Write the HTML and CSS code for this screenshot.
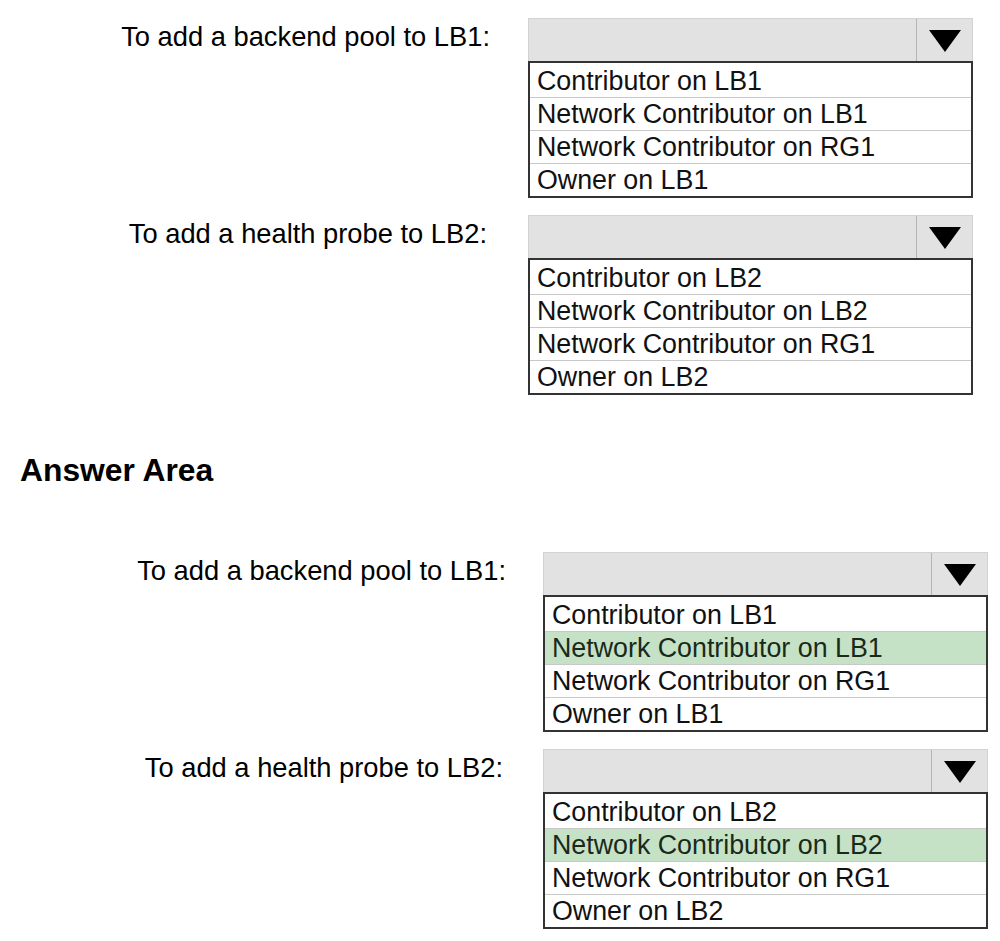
FILE: index.html
```html
<!DOCTYPE html>
<html lang="en">
<head>
    <meta charset="UTF-8">
    <meta name="viewport" content="width=device-width, initial-scale=1.0">
    <title>Load balancer roles</title>
    <link rel="stylesheet" href="styles.css">
</head>
<body>
    <main>
        <section class="question">
            <div class="item">
                <div class="label">To add a backend pool to LB1:</div>
                <div class="dropdown">
                    <div class="dropdown-head">
                        <span class="arrow">
                            <svg width="32" height="22" viewBox="0 0 32 22"><polygon points="0,0 32,0 16,22" fill="#000"/></svg>
                        </span>
                    </div>
                    <ul class="options">
                        <li>Contributor on LB1</li>
                        <li>Network Contributor on LB1</li>
                        <li>Network Contributor on RG1</li>
                        <li>Owner on LB1</li>
                    </ul>
                </div>
            </div>
            <div class="item">
                <div class="label short">To add a health probe to LB2:</div>
                <div class="dropdown">
                    <div class="dropdown-head">
                        <span class="arrow">
                            <svg width="32" height="22" viewBox="0 0 32 22"><polygon points="0,0 32,0 16,22" fill="#000"/></svg>
                        </span>
                    </div>
                    <ul class="options">
                        <li>Contributor on LB2</li>
                        <li>Network Contributor on LB2</li>
                        <li>Network Contributor on RG1</li>
                        <li>Owner on LB2</li>
                    </ul>
                </div>
            </div>
        </section>

        <h2 class="answer-title">Answer Area</h2>

        <section class="question answer">
            <div class="item">
                <div class="label">To add a backend pool to LB1:</div>
                <div class="dropdown">
                    <div class="dropdown-head">
                        <span class="arrow">
                            <svg width="32" height="22" viewBox="0 0 32 22"><polygon points="0,0 32,0 16,22" fill="#000"/></svg>
                        </span>
                    </div>
                    <ul class="options">
                        <li>Contributor on LB1</li>
                        <li class="selected">Network Contributor on LB1</li>
                        <li>Network Contributor on RG1</li>
                        <li>Owner on LB1</li>
                    </ul>
                </div>
            </div>
            <div class="item">
                <div class="label short">To add a health probe to LB2:</div>
                <div class="dropdown">
                    <div class="dropdown-head">
                        <span class="arrow">
                            <svg width="32" height="22" viewBox="0 0 32 22"><polygon points="0,0 32,0 16,22" fill="#000"/></svg>
                        </span>
                    </div>
                    <ul class="options">
                        <li>Contributor on LB2</li>
                        <li class="selected">Network Contributor on LB2</li>
                        <li>Network Contributor on RG1</li>
                        <li>Owner on LB2</li>
                    </ul>
                </div>
            </div>
        </section>
    </main>
</body>
</html>
```

FILE: styles.css
```css
body {
    font-family: 'Liberation Sans', Arial, sans-serif;
    margin: 0;
    padding: 0;
    background-color: #fff;
    color: #000;
}
.question {
    display: flex;
    flex-direction: column;
    gap: 17px;
    padding-top: 18px;
}
.item {
    display: flex;
    align-items: flex-start;
}
.label {
    width: 490px;
    margin-right: 38px;
    text-align: right;
    font-size: 27.3px;
    line-height: 38px;
}
.label.short {
    width: 487px;
    margin-right: 41px;
}
.answer .label {
    width: 506px;
    margin-right: 37px;
}
.answer .label.short {
    width: 503px;
    margin-right: 40px;
}
.answer {
    gap: 17px;
    padding-top: 66px;
}
.dropdown {
    width: 445px;
}
.dropdown-head {
    display: flex;
    justify-content: flex-end;
    height: 43px;
    box-sizing: border-box;
    background-color: #e2e2e2;
    border: 1px solid #d2d2d2;
    border-bottom: none;
}
.arrow {
    width: 55px;
    display: flex;
    align-items: center;
    justify-content: center;
    padding-top: 2px;
    border-left: 1px solid #b4b4b4;
}
.options {
    list-style-type: none;
    margin: 0;
    padding: 0;
    border: 2px solid #333;
}
.options li {
    font-size: 26.8px;
    line-height: 32px;
    padding-left: 7px;
    color: #111;
    border-bottom: 1px solid #c8c8c8;
}
.options li:first-child {
    padding-top: 2px;
}
.options li:last-child {
    border-bottom: none;
}
.options li.selected {
    background-color: #c6e2c6;
    color: #1a2a1a;
}
.answer-title {
    margin: 60px 0 0 20px;
    font-size: 31.8px;
    line-height: 31px;
    font-weight: bold;
}
```
